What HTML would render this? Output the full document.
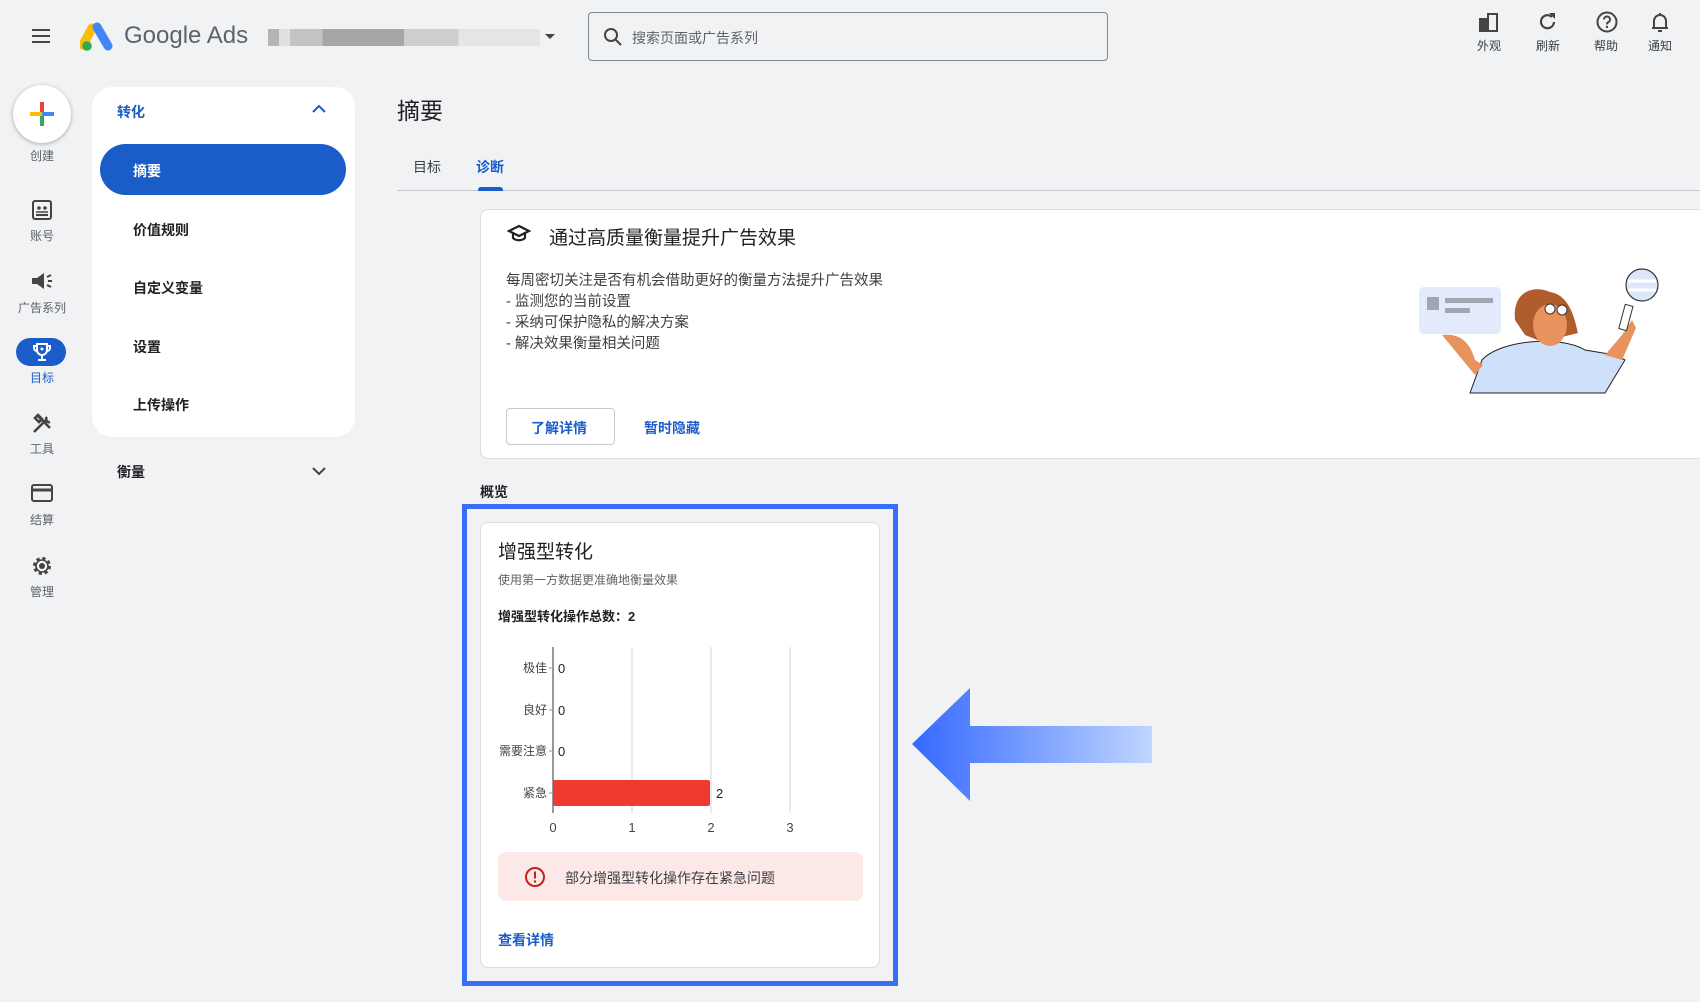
<!DOCTYPE html>
<html><head><meta charset="utf-8"><style>
*{box-sizing:border-box;margin:0;padding:0}
body{width:1700px;height:1002px;background:#f0f2f4;font-family:"Liberation Sans","Noto Sans CJK SC",sans-serif;color:#202124;position:relative;overflow:hidden}
.a{position:absolute;white-space:nowrap}
.lbl{font-size:12px;color:#5f6368;transform:translateX(-50%)}
.nav{font-size:14px;font-weight:bold;color:#202124}
</style></head><body>
<!-- header -->
<svg class="a" style="left:31px;top:28px" width="20" height="16"><path d="M1 2h18M1 8h18M1 14h18" stroke="#444" stroke-width="2"/></svg>
<svg class="a" style="left:80px;top:22px" width="34" height="30" viewBox="0 0 34 30"><path d="M12 6 L3 23" stroke="#fbbc04" stroke-width="9" stroke-linecap="round"/><path d="M17 5 L28 24" stroke="#4285f4" stroke-width="9" stroke-linecap="round"/><circle cx="7" cy="24" r="4.8" fill="#34a853"/></svg>
<div class="a" style="left:124px;top:22px;font-size:24px;color:#5f6368">Google Ads</div>
<div class="a" style="left:268px;top:29px;width:272px;height:17px;background:linear-gradient(90deg,#aaa 0 4%,#ddd 4% 8%,#bbb 8% 20%,#999 20% 50%,#c8c8c8 50% 70%,#e3e3e3 70% 100%);opacity:.85"></div>
<div class="a" style="left:545px;top:34px;border:5px solid transparent;border-top:5px solid #444;border-bottom:0;width:0"></div>
<div class="a" style="left:588px;top:12px;width:520px;height:49px;border:1px solid #80868b;border-radius:4px;background:#f0f2f4"></div>
<svg class="a" style="left:603px;top:27px" width="20" height="20"><circle cx="8" cy="8" r="6" fill="none" stroke="#444" stroke-width="2"/><path d="M12.5 12.5L18 18" stroke="#444" stroke-width="2"/></svg>
<div class="a" style="left:632px;top:28px;font-size:14px;color:#5f6368">搜索页面或广告系列</div>
<svg class="a" style="left:1478px;top:11px" width="22" height="22"><path d="M2 8h8v12H2zM10 3h9v17h-9z" fill="none" stroke="#444" stroke-width="2"/><path d="M3 9h7v11H3z" fill="#444"/></svg>
<svg class="a" style="left:1537px;top:11px" width="22" height="22"><path d="M17 11a6.5 6.5 0 1 1-2-5" fill="none" stroke="#444" stroke-width="2.2"/><path d="M12 2h6v6z" fill="#444"/></svg>
<svg class="a" style="left:1595px;top:10px" width="24" height="24"><circle cx="12" cy="12" r="9.5" fill="none" stroke="#444" stroke-width="2"/><path d="M9 9.5a3 3 0 1 1 4 2.8c-1 .5-1 1-1 2.2" fill="none" stroke="#444" stroke-width="2"/><circle cx="12" cy="17" r="1.2" fill="#444"/></svg>
<svg class="a" style="left:1649px;top:10px" width="22" height="24"><path d="M5 18V11a6 6 0 0 1 12 0v7h2M3 18h16" fill="none" stroke="#444" stroke-width="2"/><path d="M11 3v2M9 21h4" stroke="#444" stroke-width="2"/></svg>
<div class="a lbl" style="left:1489px;top:37px;color:#3c4043">外观</div>
<div class="a lbl" style="left:1548px;top:37px;color:#3c4043">刷新</div>
<div class="a lbl" style="left:1606px;top:37px;color:#3c4043">帮助</div>
<div class="a lbl" style="left:1660px;top:37px;color:#3c4043">通知</div>

<!-- rail -->
<div class="a" style="left:13px;top:85px;width:58px;height:58px;border-radius:50%;background:#fff;box-shadow:0 1px 4px rgba(0,0,0,.3)"></div>
<svg class="a" style="left:28px;top:100px" width="28" height="28"><path d="M14 2v12" stroke="#ea4335" stroke-width="4"/><path d="M14 14v12" stroke="#34a853" stroke-width="4"/><path d="M2 14h12" stroke="#fbbc04" stroke-width="4"/><path d="M14 14h12" stroke="#4285f4" stroke-width="4"/></svg>
<div class="a lbl" style="left:42px;top:147px">创建</div>
<svg class="a" style="left:31px;top:199px" width="22" height="22"><rect x="2" y="2" width="18" height="18" rx="2" fill="none" stroke="#444" stroke-width="2"/><path d="M5 16h12" stroke="#444" stroke-width="2"/><path d="M5 13h12" stroke="#444" stroke-width="1.5"/><circle cx="8" cy="9" r="1.8" fill="#444"/><circle cx="14" cy="9" r="1.8" fill="#444"/></svg>
<div class="a lbl" style="left:42px;top:227px">账号</div>
<svg class="a" style="left:30px;top:271px" width="24" height="20"><path d="M2 7h5l7-5v16l-7-5H2z" fill="#444"/><path d="M17 6l4-2M18 10h4M17 14l4 2" stroke="#444" stroke-width="2"/></svg>
<div class="a lbl" style="left:42px;top:299px">广告系列</div>
<div class="a" style="left:16px;top:338px;width:50px;height:28px;border-radius:14px;background:#1a5dc8"></div>
<svg class="a" style="left:31px;top:341px" width="22" height="22"><path d="M6 3h10v6a5 5 0 0 1-10 0z M6 5H3v2a3 3 0 0 0 3 3M16 5h3v2a3 3 0 0 1-3 3M11 14v4M7 19h8" fill="none" stroke="#fff" stroke-width="2"/><circle cx="11" cy="8" r="1.5" fill="#fff"/></svg>
<div class="a lbl" style="left:42px;top:369px;color:#1a5dc8">目标</div>
<svg class="a" style="left:31px;top:413px" width="22" height="22"><path d="M3 19L15 7M7 3l12 12M4 5l3-3 4 4-3 3zM16 4a3 3 0 0 0 3 5" fill="none" stroke="#444" stroke-width="2.6"/></svg>
<div class="a lbl" style="left:42px;top:440px">工具</div>
<svg class="a" style="left:30px;top:483px" width="24" height="20"><rect x="2" y="2" width="20" height="16" rx="2" fill="none" stroke="#444" stroke-width="2"/><path d="M2 7h20" stroke="#444" stroke-width="3"/></svg>
<div class="a lbl" style="left:42px;top:511px">结算</div>
<svg class="a" style="left:30px;top:554px" width="24" height="24"><circle cx="12" cy="12" r="7.5" fill="none" stroke="#444" stroke-width="3" stroke-dasharray="3.2 2.7"/><circle cx="12" cy="12" r="6" fill="none" stroke="#444" stroke-width="1.6"/><circle cx="12" cy="12" r="3" fill="#444"/></svg>
<div class="a lbl" style="left:42px;top:583px">管理</div>

<!-- nav panel -->
<div class="a" style="left:92px;top:87px;width:263px;height:350px;background:#fff;border-radius:20px"></div>
<div class="a nav" style="left:117px;top:102px;color:#1a5dc8">转化</div>
<svg class="a" style="left:311px;top:104px" width="16" height="10"><path d="M2 8l6-6 6 6" fill="none" stroke="#1a5dc8" stroke-width="2"/></svg>
<div class="a" style="left:100px;top:144px;width:246px;height:51px;background:#1a5dc8;border-radius:26px"></div>
<div class="a nav" style="left:133px;top:161px;color:#fff">摘要</div>
<div class="a nav" style="left:133px;top:220px">价值规则</div>
<div class="a nav" style="left:133px;top:278px">自定义变量</div>
<div class="a nav" style="left:133px;top:337px">设置</div>
<div class="a nav" style="left:133px;top:395px">上传操作</div>
<div class="a nav" style="left:117px;top:462px">衡量</div>
<svg class="a" style="left:311px;top:466px" width="16" height="10"><path d="M2 2l6 6 6-6" fill="none" stroke="#444" stroke-width="2"/></svg>

<!-- main -->
<div class="a" style="left:397px;top:92px;font-size:23px">摘要</div>
<div class="a" style="left:413px;top:157px;font-size:14px;color:#3c4043">目标</div>
<div class="a" style="left:476px;top:157px;font-size:14px;color:#1a5dc8;font-weight:bold">诊断</div>
<div class="a" style="left:397px;top:190px;width:1303px;height:1px;background:#c8cacd"></div>
<div class="a" style="left:478px;top:187px;width:25px;height:4px;border-radius:3px 3px 0 0;background:#1a5dc8"></div>

<div class="a" style="left:480px;top:209px;width:1240px;height:250px;background:#fff;border:1px solid #dadce0;border-radius:8px"></div>
<svg class="a" style="left:507px;top:223px" width="24" height="20"><path d="M2 8l10-5 10 5-10 5z M6 10v5c3 3 9 3 12 0v-5" fill="none" stroke="#202124" stroke-width="2.2"/></svg>
<div class="a" style="left:549px;top:223px;font-size:19px">通过高质量衡量提升广告效果</div>
<div class="a" style="left:506px;top:271px;font-size:14.5px;line-height:21px;color:#3c4043">每周密切关注是否有机会借助更好的衡量方法提升广告效果<br>- 监测您的当前设置<br>- 采纳可保护隐私的解决方案<br>- 解决效果衡量相关问题</div>
<div class="a" style="left:506px;top:408px;width:109px;height:37px;border:1px solid #c8cacd;border-radius:4px"></div>
<div class="a" style="left:531px;top:418px;font-size:14px;color:#1a5dc8;font-weight:bold">了解详情</div>
<div class="a" style="left:644px;top:418px;font-size:14px;color:#1a5dc8;font-weight:bold">暂时隐藏</div>
<svg class="a" style="left:1400px;top:250px" width="300" height="160" viewBox="0 0 300 160">
<rect x="19" y="37" width="82" height="47" rx="5" fill="#e3eafb"/><rect x="27" y="47" width="12" height="13" fill="#a0a7b3"/><rect x="45" y="48" width="48" height="5" fill="#a0a7b3"/><rect x="45" y="58" width="25" height="5" fill="#a0a7b3"/>
<path d="M70 143 L82 110 C100 90 160 85 185 100 L215 105 L225 110 L205 143 Z" fill="#cfe0fb" stroke="#222" stroke-width="1"/>
<path d="M115 70 C112 40 135 35 150 42 C170 45 175 70 178 83 L162 87 L150 95 L125 85 Z" fill="#b05c2d"/>
<ellipse cx="150" cy="75" rx="17" ry="21" fill="#e8935e"/>
<circle cx="150" cy="59" r="5" fill="#fff" stroke="#333"/><circle cx="162" cy="60" r="5" fill="#fff" stroke="#333"/>
<path d="M42 85 C60 83 70 92 75 110 L83 115 L75 125 Z" fill="#e8935e"/>
<path d="M205 105 L222 85 L232 70 L236 78 L222 110 Z" fill="#e8935e"/>
<rect x="222" y="55" width="8" height="25" fill="#fff" stroke="#333" transform="rotate(15 226 67)"/>
<circle cx="242" cy="35" r="16" fill="#dde7fb" stroke="#333" stroke-width="1.2"/><path d="M228 31h28M228 40h28" stroke="#fff" stroke-width="3"/>
</svg>

<div class="a" style="left:480px;top:482px;font-size:14px;font-weight:bold">概览</div>

<!-- highlighted card -->
<div class="a" style="left:462px;top:504px;width:436px;height:482px;border:5px solid #3a6df5"></div>
<div class="a" style="left:480px;top:522px;width:400px;height:446px;background:#fff;border:1px solid #dadce0;border-radius:8px"></div>
<div class="a" style="left:498px;top:537px;font-size:19px">增强型转化</div>
<div class="a" style="left:498px;top:571px;font-size:12px;color:#5f6368">使用第一方数据更准确地衡量效果</div>
<div class="a" style="left:498px;top:606px;font-size:13px;font-weight:bold">增强型转化操作总数：2</div>
<svg class="a" style="left:480px;top:640px" width="400" height="200">
<g stroke="#e3e3e3" stroke-width="1.5"><path d="M152 7V173M231 7V173M310 7V173"/></g>
<path d="M73 7V173" stroke="#777" stroke-width="1.5"/>
<g stroke="#999"><path d="M69 28h4M69 70h4M69 111h4M69 153h4"/></g>
<rect x="73" y="140" width="157" height="26" rx="2" fill="#ef3b2f"/>
<g font-size="12" fill="#444" font-family="Liberation Sans,Noto Sans CJK SC,sans-serif" text-anchor="end"><text x="67" y="32">极佳</text><text x="67" y="74">良好</text><text x="67" y="115">需要注意</text><text x="67" y="157">紧急</text></g>
<g font-size="13" fill="#202124" font-family="Liberation Sans,sans-serif"><text x="78" y="33">0</text><text x="78" y="75">0</text><text x="78" y="116">0</text><text x="236" y="158">2</text></g>
<g font-size="13" fill="#444" font-family="Liberation Sans,sans-serif" text-anchor="middle"><text x="73" y="192">0</text><text x="152" y="192">1</text><text x="231" y="192">2</text><text x="310" y="192">3</text></g>
</svg>
<div class="a" style="left:498px;top:852px;width:365px;height:49px;background:#fce8e6;border-radius:8px"></div>
<svg class="a" style="left:524px;top:866px" width="22" height="22"><circle cx="11" cy="11" r="9" fill="none" stroke="#c5221f" stroke-width="2"/><path d="M11 5.5v7" stroke="#c5221f" stroke-width="2"/><circle cx="11" cy="15.5" r="1.2" fill="#c5221f"/></svg>
<div class="a" style="left:565px;top:868px;font-size:14px;color:#3c4043">部分增强型转化操作存在紧急问题</div>
<div class="a" style="left:498px;top:930px;font-size:14px;color:#1a5dc8;font-weight:bold">查看详情</div>

<!-- arrow -->
<svg class="a" style="left:900px;top:680px" width="260" height="130">
<defs><linearGradient id="g" x1="0" x2="1"><stop offset="0" stop-color="#3468ff"/><stop offset="1" stop-color="#c0d6ff"/></linearGradient></defs>
<path d="M12 64 L70 8 L70 46 L252 46 L252 83 L70 83 L70 121 Z" fill="url(#g)"/>
</svg>
</body></html>
